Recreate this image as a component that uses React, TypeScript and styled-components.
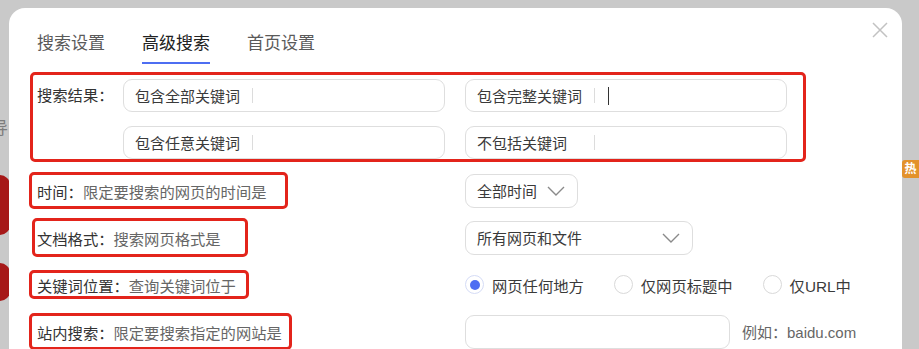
import styled, { createGlobalStyle } from "styled-components";

const GlobalStyle = createGlobalStyle`
  html, body {
    margin: 0;
    padding: 0;
    background: #c9c9c9;
    overflow: hidden;
  }
  body {
    font-family: "Liberation Sans", "Noto Sans CJK SC", sans-serif;
    color: #333;
  }
`;

const Screen = styled.div`
  display: flex;
  width: 919px;
  height: 349px;
  overflow: hidden;
  background: #c9c9c9;
`;

const Peek = styled.div<{ $width: number }>`
  flex: 0 0 ${(p) => p.$width}px;
  display: flex;
  flex-direction: column;
  overflow: hidden;
`;

const PeekChar = styled.div`
  margin: 118px 0 0 -9px;
  font-size: 17px;
  line-height: 22px;
  color: #7d7d7d;
`;

const PeekLogo = styled.div<{ $top: number; $height: number }>`
  margin-top: ${(p) => p.$top}px;
  height: ${(p) => p.$height}px;
  width: 14px;
  margin-left: -4px;
  background: #a61818;
  border-radius: 0 10px 10px 0;
`;

const Badge = styled.div`
  margin-top: 160px;
  width: 17px;
  height: 18px;
  border-radius: 3px 0 0 3px;
  background: #e3922c;
  color: #fff;
  font-size: 12px;
  line-height: 18px;
  text-align: center;
  font-weight: 700;
`;

const Modal = styled.div`
  position: relative;
  flex: 0 0 893px;
  margin-top: 8px;
  height: 380px;
  box-sizing: border-box;
  padding: 24px 0 0 20px;
  background: #fff;
  border-radius: 16px 16px 0 0;
`;

const CloseButton = styled.div`
  position: absolute;
  top: 14px;
  right: 14px;
  width: 16px;
  height: 16px;
  display: flex;
`;

const Tabs = styled.div`
  display: flex;
  gap: 37px;
  padding-left: 8px;
`;

const Tab = styled.div<{ $active?: boolean }>`
  font-size: 17px;
  line-height: 24px;
  padding-bottom: 6px;
  color: ${(p) => (p.$active ? "#222" : "#5a5a5a")};
  border-bottom: 2px solid ${(p) => (p.$active ? "#4e6ef2" : "transparent")};
`;

const Highlight = styled.div<{ $w?: number; $h?: number; $shift?: number; $pad?: number }>`
  box-sizing: border-box;
  margin-left: ${(p) => p.$shift ?? 0}px;
  width: ${(p) => (p.$w ? `${p.$w}px` : "auto")};
  height: ${(p) => (p.$h ? `${p.$h}px` : "auto")};
  border: 3px solid #e3241b;
  border-radius: 5px;
  padding-left: ${(p) => p.$pad ?? 5}px;
  display: flex;
  align-items: center;
`;

const KeywordBlock = styled(Highlight)`
  margin-top: 8px;
  width: 776px;
  align-items: flex-start;
  padding: 4px 16px 0 4px;
`;

const FieldLabel = styled.div`
  flex: 0 0 86px;
  font-size: 15.3px;
  line-height: 33px;
  color: #333;
`;

const InputGrid = styled.div`
  display: grid;
  grid-template-columns: 322px 322px;
  column-gap: 20px;
  row-gap: 14px;
`;

const KeywordInput = styled.div`
  box-sizing: border-box;
  height: 33px;
  display: flex;
  align-items: center;
  padding-left: 11px;
  border: 1px solid #dedede;
  border-radius: 9px;
`;

const Prefix = styled.span`
  flex: 0 0 106px;
  margin-right: 11px;
  font-size: 15px;
  color: #3a3a3a;
  white-space: nowrap;
`;

const Divider = styled.span`
  width: 1px;
  height: 15px;
  background: #dcdcdc;
`;

const Caret = styled.span`
  width: 1px;
  height: 18px;
  margin-left: 13px;
  background: #333;
`;

const OptionRow = styled.div<{ $first?: boolean }>`
  display: flex;
  align-items: center;
  height: 47px;
  margin-top: ${(p) => (p.$first ? 5 : 0)}px;
`;

const OptionLabel = styled.div`
  flex: 0 0 436px;
  display: flex;
`;

const Name = styled.span`
  font-size: 15.3px;
  color: #333;
  white-space: nowrap;
`;

const Desc = styled.span`
  font-size: 15.3px;
  color: #666;
  white-space: nowrap;
`;

const Select = styled.div<{ $width: number }>`
  box-sizing: border-box;
  width: ${(p) => p.$width}px;
  height: 34px;
  display: flex;
  align-items: center;
  justify-content: space-between;
  padding: 0 12px 0 11px;
  border: 1px solid #dedede;
  border-radius: 9px;
  font-size: 15px;
  color: #3a3a3a;
`;

const RadioGroup = styled.div`
  display: flex;
  align-items: center;
  gap: 30px;
`;

const RadioItem = styled.label`
  display: flex;
  align-items: center;
  gap: 8px;
  font-size: 15.3px;
  color: #3a3a3a;
`;

const RadioDot = styled.span<{ $checked?: boolean }>`
  box-sizing: border-box;
  width: 19px;
  height: 19px;
  border-radius: 50%;
  border: 1px solid ${(p) => (p.$checked ? "#d5dcf6" : "#d9d9d9")};
  display: flex;
  align-items: center;
  justify-content: center;
  &::after {
    content: "";
    width: 10px;
    height: 10px;
    border-radius: 50%;
    background: ${(p) => (p.$checked ? "#4e6ef2" : "transparent")};
  }
`;

const SiteInput = styled.div`
  box-sizing: border-box;
  width: 265px;
  height: 34px;
  border: 1px solid #dedede;
  border-radius: 9px;
`;

const Hint = styled.span`
  margin-left: 12px;
  font-size: 15px;
  color: #666;
`;

const Chevron = () => (
  <svg width="18" height="10" viewBox="0 0 18 10">
    <polyline points="1,1 9,9 17,1" fill="none" stroke="#8a8a8a" strokeWidth="1.4" />
  </svg>
);

const keywordFields = [
  { label: "包含全部关键词" },
  { label: "包含完整关键词", focused: true },
  { label: "包含任意关键词" },
  { label: "不包括关键词" },
];

const positions = [
  { label: "网页任何地方", checked: true },
  { label: "仅网页标题中" },
  { label: "仅URL中" },
];

export default function App() {
  return (
    <>
      <GlobalStyle />
      <Screen>
        <Peek $width={9}>
          <PeekChar>导</PeekChar>
          <PeekLogo $top={35} $height={60} />
          <PeekLogo $top={28} $height={38} />
        </Peek>

        <Modal>
          <CloseButton>
            <svg width="16" height="16" viewBox="0 0 16 16">
              <path d="M1 1 L15 15 M15 1 L1 15" stroke="#c2c2c2" strokeWidth="1.5" />
            </svg>
          </CloseButton>

          <Tabs>
            <Tab>搜索设置</Tab>
            <Tab $active>高级搜索</Tab>
            <Tab>首页设置</Tab>
          </Tabs>

          <KeywordBlock $shift={1}>
            <FieldLabel>搜索结果：</FieldLabel>
            <InputGrid>
              {keywordFields.map((f) => (
                <KeywordInput key={f.label}>
                  <Prefix>{f.label}</Prefix>
                  <Divider />
                  {f.focused && <Caret />}
                </KeywordInput>
              ))}
            </InputGrid>
          </KeywordBlock>

          <OptionRow $first>
            <OptionLabel>
              <Highlight $w={259} $h={37}>
                <Name>时间：</Name>
                <Desc>限定要搜索的网页的时间是</Desc>
              </Highlight>
            </OptionLabel>
            <Select $width={113}>
              全部时间
              <Chevron />
            </Select>
          </OptionRow>

          <OptionRow>
            <OptionLabel>
              <Highlight $w={216} $h={39} $shift={3} $pad={2}>
                <Name>文档格式：</Name>
                <Desc>搜索网页格式是</Desc>
              </Highlight>
            </OptionLabel>
            <Select $width={228}>
              所有网页和文件
              <Chevron />
            </Select>
          </OptionRow>

          <OptionRow>
            <OptionLabel>
              <Highlight $w={220} $h={29}>
                <Name>关键词位置：</Name>
                <Desc>查询关键词位于</Desc>
              </Highlight>
            </OptionLabel>
            <RadioGroup>
              {positions.map((p) => (
                <RadioItem key={p.label}>
                  <RadioDot $checked={p.checked} />
                  {p.label}
                </RadioItem>
              ))}
            </RadioGroup>
          </OptionRow>

          <OptionRow>
            <OptionLabel>
              <Highlight $w={263} $h={37}>
                <Name>站内搜索：</Name>
                <Desc>限定要搜索指定的网站是</Desc>
              </Highlight>
            </OptionLabel>
            <SiteInput />
            <Hint>例如：baidu.com</Hint>
          </OptionRow>
        </Modal>

        <Peek $width={17}>
          <Badge>热</Badge>
        </Peek>
      </Screen>
    </>
  );
}
